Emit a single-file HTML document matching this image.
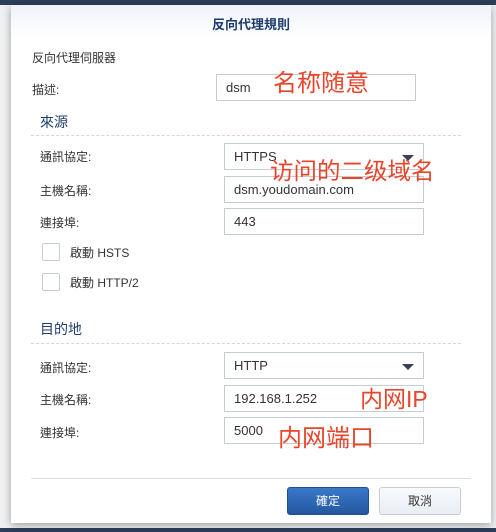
<!DOCTYPE html>
<html><head><meta charset="utf-8"><style>
*{margin:0;padding:0;box-sizing:border-box}
body{width:496px;height:532px;overflow:hidden;background:#eef0f2;position:relative;font-family:"Liberation Sans","Noto Sans CJK TC",sans-serif;font-size:12px;color:#333}
.a{position:absolute;white-space:nowrap}
.dlg{position:absolute;left:11px;top:5px;width:480px;height:518px;background:#fff;box-shadow:0 2px 8px rgba(0,0,0,.35)}
.in{position:absolute;border:1px solid #c6ccd3;background:#fff;height:27px;width:200px;padding-left:9px;line-height:25px;font-size:13px;color:#333}
.lab{position:absolute;font-size:12px;color:#333}
.sec{position:absolute;font-size:14px;color:#1d3d6e}
.dash{position:absolute;left:31px;width:430px;border-top:1px dashed #d3d7dc}
.red{position:absolute;color:#e8452a;font-family:"Liberation Sans","Noto Sans CJK SC",sans-serif;white-space:nowrap;line-height:1}
.cb{position:absolute;left:42px;width:18px;height:18px;border:1px solid #c6ccd3;border-radius:2px;background:#fff}
.arr{position:absolute;right:9px;top:11px;width:0;height:0;border-left:6px solid transparent;border-right:6px solid transparent;border-top:6px solid #3a4450}
</style></head><body>
<div style="position:absolute;left:0;top:0;width:496px;height:5px;background:#2b3e5a"></div>
<div style="position:absolute;left:0;top:528px;width:496px;height:4px;background:#2b3e5a"></div>
<div class="dlg"></div>
<div class="a" style="left:11px;top:5px;width:480px;height:32px;background:linear-gradient(#eef3f9,#fff);"></div>
<div class="a" style="left:11px;top:14px;width:480px;text-align:center;font-weight:bold;font-size:13px;color:#1d3d6e">反向代理規則</div>
<div class="lab" style="left:32px;top:49px">反向代理伺服器</div>
<div class="lab" style="left:32px;top:81px">描述:</div>
<div class="in" style="left:216px;top:74px">dsm</div>
<div class="red" style="left:273px;top:72px;font-size:24px">名称随意</div>
<div class="sec" style="left:40px;top:112px">來源</div>
<div class="dash" style="top:135px"></div>
<div class="lab" style="left:40px;top:148px">通訊協定:</div>
<div class="in" style="left:224px;top:143px">HTTPS<div class="arr"></div></div>
<div class="lab" style="left:40px;top:182px">主機名稱:</div>
<div class="in" style="left:224px;top:176px">dsm.youdomain.com</div>
<div class="lab" style="left:40px;top:214px">連接埠:</div>
<div class="in" style="left:224px;top:208px">443</div>
<div class="red" style="left:270px;top:160px;font-size:23.5px">访问的二级域名</div>
<div class="cb" style="top:243px"></div>
<div class="lab" style="left:70px;top:244px">啟動 HSTS</div>
<div class="cb" style="top:273px"></div>
<div class="lab" style="left:70px;top:274px">啟動 HTTP/2</div>
<div class="sec" style="left:40px;top:319px">目的地</div>
<div class="dash" style="top:343px"></div>
<div class="lab" style="left:40px;top:359px">通訊協定:</div>
<div class="in" style="left:224px;top:352px">HTTP<div class="arr"></div></div>
<div class="lab" style="left:40px;top:391px">主機名稱:</div>
<div class="in" style="left:224px;top:385px">192.168.1.252</div>
<div class="red" style="left:360px;top:388px;font-size:23px">内网IP</div>
<div class="lab" style="left:40px;top:424px">連接埠:</div>
<div class="in" style="left:224px;top:417px">5000</div>
<div class="red" style="left:278px;top:427px;font-size:24px">内网端口</div>
<div class="a" style="left:31px;top:478px;width:440px;border-top:1px solid #dde1e5"></div>
<div class="a" style="left:287px;top:487px;width:82px;height:28px;border-radius:3px;background:linear-gradient(#3a78c8,#23589f);border:1px solid #1f4f90;color:#fff;text-align:center;line-height:26px;font-size:12px">確定</div>
<div class="a" style="left:379px;top:487px;width:82px;height:28px;border-radius:3px;background:linear-gradient(#f8fafc,#e9eef4);border:1px solid #c6ccd3;color:#333;text-align:center;line-height:26px;font-size:12px">取消</div>
</body></html>
